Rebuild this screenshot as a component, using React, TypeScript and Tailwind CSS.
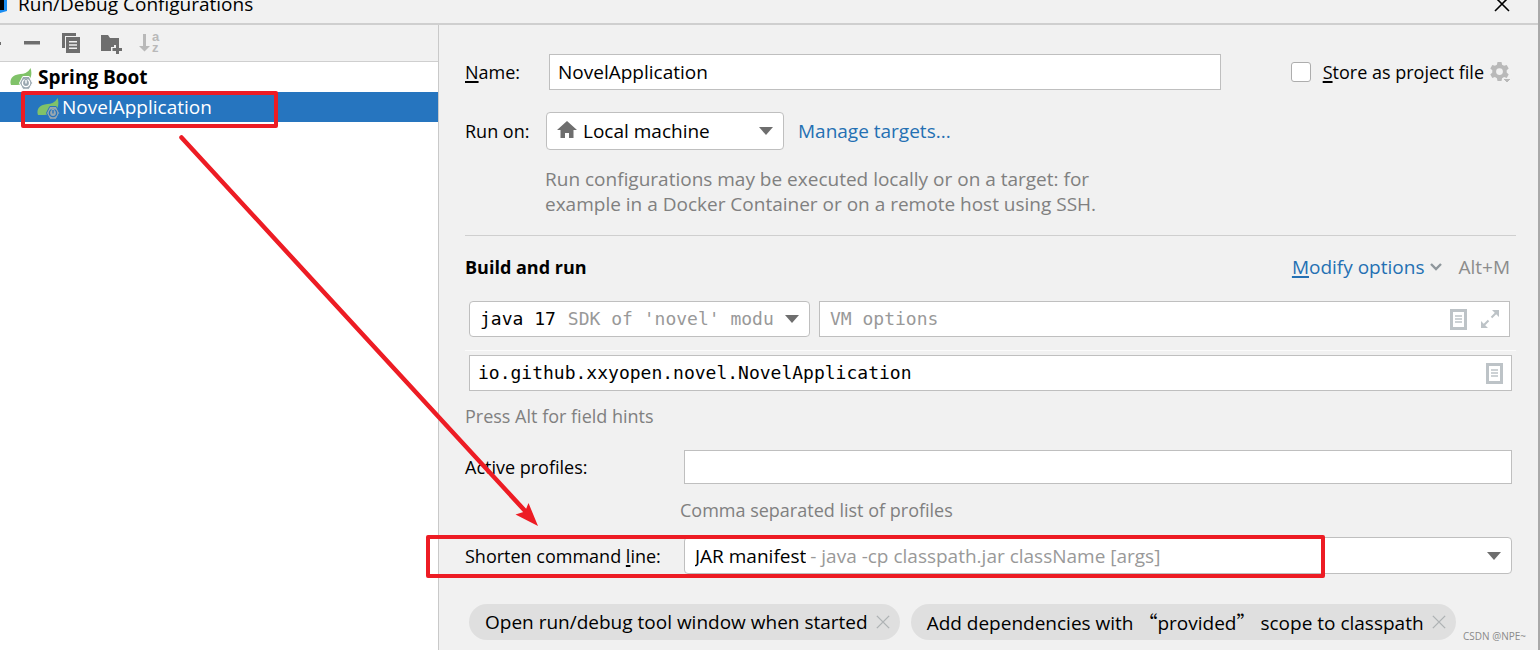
import React from "react";

const chips = [
  { id: "tool-window", label: <>Open run/debug tool window when started</> },
  {
    id: "provided",
    label: (
      <>
        Add dependencies with <Quote>“</Quote>provided<Quote>”</Quote> scope to classpath
      </>
    ),
  },
];

export default function App() {
  return (
    <div className="relative flex min-h-screen flex-col overflow-hidden border-r-2 border-[#a9a9a9] bg-[#f1f1f1] font-['Open_Sans','Noto_Sans_CJK_SC',sans-serif] text-[19px] leading-6 text-black">
      <header className="flex h-[25px] items-end justify-between border-b-2 border-[#cfcfcf] pr-7 pb-[7px]">
        <div className="flex items-end gap-[11px]">
          <LogoIcon />
          <h1>Run/Debug Configurations</h1>
        </div>
        <button aria-label="Close" className="flex h-6 items-center">
          <CloseIcon className="h-4 w-4" />
        </button>
      </header>

      <div className="flex flex-1">
        <Sidebar />
        <main className="min-w-0 flex-1 pt-[29px] pr-[22px] pl-[26px]">
          <div className="flex h-9 items-center pr-1">
            <label htmlFor="name" className="w-[84px] text-[18px]">
              <Mnemonic>N</Mnemonic>ame:
            </label>
            <input
              id="name"
              defaultValue="NovelApplication"
              className="h-9 min-w-0 flex-1 border border-[#bfbfbf] bg-white px-2"
            />
            <input
              id="store"
              type="checkbox"
              className="ml-[70px] h-5 w-5 appearance-none rounded-[3px] border border-[#adadad] bg-white"
            />
            <label htmlFor="store" className="ml-3 text-[18px]">
              <Mnemonic>S</Mnemonic>tore as project file
            </label>
            <button aria-label="Storage settings" className="ml-1.5">
              <GearIcon />
            </button>
          </div>

          <div className="mt-[22px] flex h-[38px] items-center">
            <label htmlFor="target" className="w-[81px] text-[18px]">
              Run on:
            </label>
            <div className="flex h-full w-[238px] items-center gap-1.5 rounded-[4px] border border-[#bfbfbf] bg-white px-2.5">
              <HomeIcon />
              <select id="target" className="min-w-0 flex-1 appearance-none bg-transparent">
                <option>Local machine</option>
              </select>
              <ArrowDown />
            </div>
            <a href="#targets" className="ml-[14px] text-[#2470b3]">
              Manage targets...
            </a>
          </div>
          <p className="mt-[17px] ml-20 leading-[25px] text-[#808080]">
            Run configurations may be executed locally or on a target: for
            <br />
            example in a Docker Container or on a remote host using SSH.
          </p>

          <hr className="mt-[18px] border-[#cfcfcf]" />

          <div className="mt-[19px] flex items-center pr-1.5">
            <h2 className="flex-1 text-[18px] font-bold">Build and run</h2>
            <button className="flex items-center gap-1.5 text-[#2470b3]">
              <span>
                <Mnemonic>M</Mnemonic>odify options
              </span>
              <ChevronIcon />
            </button>
            <span className="ml-4 text-[#8c8c8c]">Alt+M</span>
          </div>

          <div className="mt-[22px] flex gap-[9px] pr-1.5 pl-1 font-['DejaVu_Sans_Mono',monospace] text-[18px]">
            <div className="flex h-9 w-[341px] items-center rounded-[4px] border border-[#bfbfbf] bg-white px-2.5">
              <select aria-label="JRE" className="field-sizing-content appearance-none bg-transparent">
                <option>java 17</option>
              </select>
              <span className="ml-3 min-w-0 flex-1 overflow-hidden whitespace-nowrap text-[#999999]">
                SDK of 'novel' modu
              </span>
              <ArrowDown />
            </div>
            <div className="flex h-9 min-w-0 flex-1 items-center border border-[#bfbfbf] bg-white px-2.5">
              <input
                aria-label="VM options"
                placeholder="VM options"
                className="min-w-0 flex-1 placeholder:text-[#999999]"
              />
              <button aria-label="Insert macros">
                <DocIcon />
              </button>
              <button aria-label="Expand" className="ml-3.5">
                <ExpandIcon />
              </button>
            </div>
          </div>

          <hr className="mt-[13px] border-[#fbfbfb]" />

          <div className="mt-1 mr-1 ml-1 flex h-9 items-center border border-[#bfbfbf] bg-white px-2 font-['DejaVu_Sans_Mono',monospace] text-[18px]">
            <input
              aria-label="Main class"
              defaultValue="io.github.xxyopen.novel.NovelApplication"
              className="min-w-0 flex-1"
            />
            <button aria-label="Insert macros">
              <DocIcon />
            </button>
          </div>
          <p className="mt-[13px] text-[18px] text-[#808080]">Press Alt for field hints</p>

          <div className="mt-[22px] flex items-center pr-1">
            <label htmlFor="profiles" className="w-[219px] text-[18px]">
              Active profiles:
            </label>
            <input
              id="profiles"
              className="h-[34px] min-w-0 flex-1 border border-[#bfbfbf] bg-white px-2"
            />
          </div>
          <p className="mt-3.5 ml-[215px] text-[18px] text-[#808080]">Comma separated list of profiles</p>

          <div className="mt-[15px] flex items-center pr-1">
            <label htmlFor="shorten" className="w-[219px] text-[18px]">
              Shorten command <Mnemonic>l</Mnemonic>ine:
            </label>
            <div className="flex h-[37px] min-w-0 flex-1 items-center rounded-[4px] border border-[#bfbfbf] bg-white px-2.5">
              <select id="shorten" className="field-sizing-content appearance-none bg-transparent">
                <option>JAR manifest</option>
              </select>
              <span className="ml-1 flex-1 whitespace-nowrap text-[#999999]">
                - java -cp classpath.jar className [args]
              </span>
              <ArrowDown />
            </div>
          </div>

          <div className="mt-[30px] flex gap-[11px] pl-1">
            {chips.map((chip) => (
              <div
                key={chip.id}
                className="flex h-9 items-center gap-2 rounded-full bg-[#dfdfdf] pr-2.5 pl-4 whitespace-nowrap"
              >
                <span>{chip.label}</span>
                <button aria-label="Remove option" className="text-[#afb3b5]">
                  <CloseIcon className="h-3.5 w-3.5" />
                </button>
              </div>
            ))}
          </div>
        </main>
      </div>

      <span className="absolute right-3 bottom-1 text-[10px] leading-5 text-[#8a8a8a]">CSDN @NPE~</span>
      <Annotations />
    </div>
  );
}

function Sidebar() {
  return (
    <aside className="w-[439px] shrink-0 border-r border-[#c9c9c9] bg-white">
      <div className="h-[37px] overflow-hidden border-b border-[#cfcfcf] bg-[#f1f1f1]">
        <div className="-ml-[27px] flex h-9">
          <ToolButton label="Add">
            <path d="M3 10h16v3H3zM9 4h4v15H9z" />
          </ToolButton>
          <ToolButton label="Remove">
            <path d="M3 9h16v3.500H3z" />
          </ToolButton>
          <ToolButton label="Copy">
            <path d="M2 1h14v3H5v12H2z" />
            <path fillRule="evenodd" d="M6 5h14v16H6zM9 9v1.500h8V9zM9 12.300v1.500h8v-1.500zM9 15.600v1.500h8v-1.500z" />
          </ToolButton>
          <ToolButton label="New folder">
            <path d="M2 3h7l2 3h9v7h-5v2h-3v4H2z" />
            <path d="M13.500 16H17v-3h3v3h3v3h-3v3h-3v-3h-3.500z" />
          </ToolButton>
          <ToolButton label="Sort" className="text-[#b9b9b9]">
            <path d="M5 2h3v12h4l-5.500 5.500L1 14h4z" />
            <text x="14" y="9" className="font-['Liberation_Sans',sans-serif] text-[13px] font-bold">
              a
            </text>
            <text x="14" y="20" className="font-['Liberation_Sans',sans-serif] text-[13px] font-bold">
              z
            </text>
          </ToolButton>
        </div>
      </div>
      <ul>
        <li className="flex h-[30px] items-center gap-[5px] pl-2.5 font-bold">
          <SpringIcon className="text-white" />
          Spring Boot
        </li>
        <li className="flex h-[30px] items-center gap-[2px] bg-[#2675bf] pl-[37px] text-white">
          <SpringIcon className="text-[#2675bf]" />
          NovelApplication
        </li>
      </ul>
    </aside>
  );
}

function ToolButton({
  label,
  className = "text-[#6e6e6e]",
  children,
}: {
  label: string;
  className?: string;
  children: React.ReactNode;
}) {
  return (
    <button aria-label={label} className={`flex w-[39px] shrink-0 items-center justify-center ${className}`}>
      <svg viewBox="0 0 22 22" fill="currentColor" className="h-[22px] w-[22px] overflow-visible">
        {children}
      </svg>
    </button>
  );
}

function Mnemonic({ children }: { children: React.ReactNode }) {
  return <span className="underline decoration-2 underline-offset-2">{children}</span>;
}

function Quote({ children }: { children: React.ReactNode }) {
  return <span className="font-['Noto_Sans_CJK_SC',sans-serif]">{children}</span>;
}

// Red marks drawn over the dialog
function Annotations() {
  return (
    <svg
      viewBox="0 0 1540 650"
      className="pointer-events-none absolute top-0 left-0 h-[650px] w-[1540px]"
      fill="none"
      stroke="#ed1c24"
      strokeWidth="4"
      strokeLinejoin="round"
    >
      <rect x="23" y="93" width="253" height="33" />
      <rect x="428" y="537" width="895" height="39" />
      <path d="M181.500 137.500L527 513" strokeWidth="4.500" strokeLinecap="round" />
      <path d="M538 526l-22.500-11.500 9.500-3 3.500-8.500z" fill="#ed1c24" stroke="none" />
    </svg>
  );
}

function LogoIcon() {
  return (
    <svg viewBox="0 0 7 24" className="h-6 w-[7px]">
      <path d="M0 0h7v19L0 21z" fill="#1a8df2" />
      <path d="M0 0h4v18H0z" fill="#000" />
    </svg>
  );
}

function CloseIcon({ className }: { className: string }) {
  return (
    <svg viewBox="0 0 16 16" fill="none" stroke="currentColor" strokeWidth="1.600" className={className}>
      <path d="M1 1l14 14M15 1L1 15" />
    </svg>
  );
}

function ArrowDown() {
  return (
    <svg viewBox="0 0 14 8" className="h-2 w-3.5 shrink-0" fill="#6e6e6e">
      <path d="M0 0h14L7 8z" />
    </svg>
  );
}

function ChevronIcon() {
  return (
    <svg viewBox="0 0 12 8" className="h-2 w-3" fill="none" stroke="#8f979c" strokeWidth="2.400">
      <path d="M1 1l5 5 5-5" />
    </svg>
  );
}

function HomeIcon() {
  return (
    <svg viewBox="0 0 20 17" className="mb-1 h-[17px] w-5 shrink-0" fill="#6e6e6e">
      <path d="M10 0l10 9h-3.500v8H12v-5H8v5H3.500V9H0z" />
    </svg>
  );
}

function GearIcon() {
  return (
    <svg viewBox="0 0 22 22" className="h-[22px] w-[22px]" fill="#b9b9b9">
      <path
        fillRule="evenodd"
        d="M7.500 1h4l.6 2.700 2 1.100 2.600-.8 2 3.400-2 1.900v2.300l2 1.900-2 3.400-2.600-.8-2 1.100-.6 2.800h-4l-.6-2.800-2-1.100-2.600.8-2-3.400 2-1.900V9.300l-2-1.900 2-3.400 2.600.8 2-1.100zM9.500 7.200a3.400 3.400 0 1 0 0 6.800 3.400 3.400 0 1 0 0-6.800z"
      />
      <path d="M12.500 17.500h9L17 22z" stroke="#f1f1f1" strokeWidth="1" />
    </svg>
  );
}

function DocIcon() {
  return (
    <svg viewBox="0 0 17 21" className="h-[21px] w-[17px]" fill="none" stroke="#bdc3c7">
      <path d="M1.500 1.500h14v18h-14z" strokeWidth="3" />
      <path d="M5 7h7M5 10h7M5 13h7" strokeWidth="1.500" />
    </svg>
  );
}

function ExpandIcon() {
  return (
    <svg viewBox="0 0 18 18" className="h-[18px] w-[18px]" fill="#bdc3c7">
      <path d="M11 0h7v7zM0 11v7h7z" />
      <path d="M15 3l-4.500 4.500M3 15l4.500-4.500" stroke="#bdc3c7" strokeWidth="2" />
    </svg>
  );
}

// the hexagon is edged in the row's own colour
function SpringIcon({ className }: { className: string }) {
  return (
    <svg viewBox="0 0 23 22" className={`mt-1 h-[22px] w-[23px] shrink-0 ${className}`}>
      <path
        d="M20.500 0c1.500 4 1.200 9-1.500 12.500-3 4-8 4.500-14 4.500H1c-1.500-4 0-8 4-9.800 3.500-1.500 7.500-.8 10.500-2.200 2-1 4-3 5-5z"
        fill="#80c269"
      />
      <path
        d="M12.800 8.500h6.400L22.500 15l-3.300 6.300h-6.400L9.500 15z"
        fill="#9aa7b0"
        stroke="currentColor"
        strokeWidth="1"
      />
      <circle cx="16" cy="15" r="3.600" fill="none" stroke="currentColor" strokeWidth="1.400" />
      <path d="M16 10.600v4.600" stroke="#9aa7b0" strokeWidth="3" />
      <path d="M16 12v3.500" stroke="currentColor" strokeWidth="1.400" />
    </svg>
  );
}
